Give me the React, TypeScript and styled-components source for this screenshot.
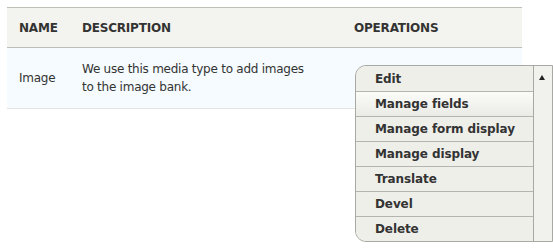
import React from 'react';
import styled, { createGlobalStyle } from 'styled-components';

const GlobalStyle = createGlobalStyle`
body {
  margin: 0;
  background: #fff;
  font-family: "DejaVu Sans", "Liberation Sans", sans-serif;
  color: #333;
}
`

const Page = styled.div`
width: 553px;
height: 250px;
overflow: hidden;
padding: 7px 0 0 7px;
box-sizing: border-box;
`

const Table = styled.table`
width: 515px;
border-collapse: collapse;
border-top: 1px solid #bfbfba;
`

const HeadCell = styled.th<{ $width?: number }>`
height: 40px;
padding: 0 12px;
box-sizing: border-box;
width: ${p => (p.$width ? `${p.$width}px` : 'auto')};
background: #f3f3ef;
border-bottom: 1px solid #bdbdb8;
text-align: left;
font-size: 12px;
font-weight: bold;
letter-spacing: -0.2px;
text-transform: uppercase;
color: #333;
`

const Row = styled.tr`
background: #f5fbfe;
border-bottom: 1px solid #e4e4e0;
`

const Cell = styled.td`
height: 61px;
padding: 0 12px;
box-sizing: border-box;
vertical-align: middle;
font-size: 12px;
line-height: 18px;
letter-spacing: -0.25px;
`

const Description = styled.div`
max-width: 226px;
`

const OpsCell = styled(Cell)`
position: relative;
`

const Dropdown = styled.div`
position: absolute;
left: 13px;
top: 17px;
width: 198px;
display: flex;
background: #efefea;
border: 1px solid #a8a8a4;
border-radius: 11px 0 0 11px;
overflow: hidden;
box-sizing: border-box;
z-index: 2;
`

const List = styled.ul`
flex: 1;
list-style: none;
margin: 0;
padding: 0;
`

const Item = styled.li<{ $hover?: boolean }>`
height: 25px;
box-sizing: border-box;
padding-left: 19px;
display: flex;
align-items: center;
font-size: 12px;
font-weight: bold;
letter-spacing: -0.1px;
color: #333;
background: ${p => (p.$hover ? 'linear-gradient(#fbfbf8, #ebebe6)' : '#efefea')};
& + & {
  border-top: 1px solid #b4b4b0;
}
`

const Scroll = styled.div`
width: 19px;
border-left: 1px solid #a8a8a4;
background: #f1f1ed;
display: flex;
justify-content: center;
padding-top: 9px;
box-sizing: border-box;
`

const Arrow = styled.span`
width: 0;
height: 0;
border-left: 3.5px solid transparent;
border-right: 3.5px solid transparent;
border-bottom: 5px solid #222;
margin-left: -2px;
`

const operations = ['Edit', 'Manage fields', 'Manage form display', 'Manage display', 'Translate', 'Devel', 'Delete'];

const App = () => {
    return (
        <>
            <GlobalStyle />
            <Page>
                <Table>
                    <thead>
                        <tr>
                            <HeadCell $width={63}>Name</HeadCell>
                            <HeadCell $width={272}>Description</HeadCell>
                            <HeadCell>Operations</HeadCell>
                        </tr>
                    </thead>
                    <tbody>
                        <Row>
                            <Cell>Image</Cell>
                            <Cell>
                                <Description>We use this media type to add images to the image bank.</Description>
                            </Cell>
                            <OpsCell>
                                <Dropdown>
                                    <List>
                                        {operations.map((op, i) => (
                                            <Item key={op} $hover={i === 1}>{op}</Item>
                                        ))}
                                    </List>
                                    <Scroll>
                                        <Arrow />
                                    </Scroll>
                                </Dropdown>
                            </OpsCell>
                        </Row>
                    </tbody>
                </Table>
            </Page>
        </>
    )
}

export default App
